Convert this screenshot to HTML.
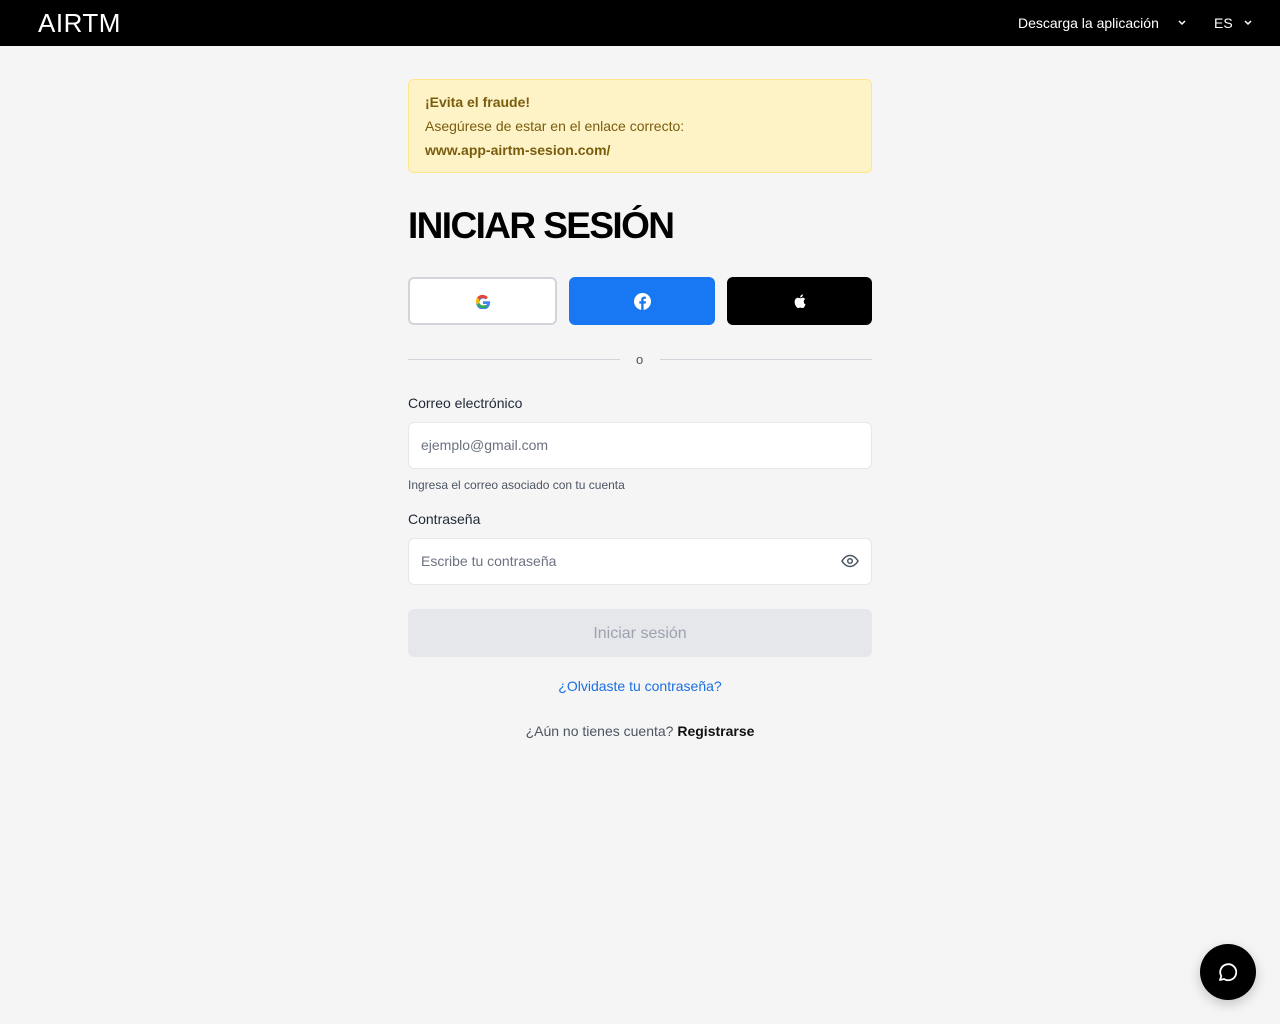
<!DOCTYPE html>
<html><head><meta charset="utf-8"><style>
*{box-sizing:border-box;margin:0;padding:0}
body{width:1280px;height:1024px;background:#f5f5f5;font-family:"Liberation Sans",sans-serif;position:relative;overflow:hidden}
.top{height:46px;background:#000;position:relative;color:#fff}
.logo{position:absolute;left:38px;top:8px;font-size:26px;font-weight:400;letter-spacing:0.5px}
.nav{position:absolute;top:15px;font-size:14px}
.chev{position:absolute;top:19px}
.alert{position:absolute;left:408px;top:79px;width:464px;height:94px;background:#fef3c7;border:1px solid #fde68a;border-radius:6px;color:#7a5c0e;padding:10px 16px;font-size:14px;line-height:24px}
h1{position:absolute;left:408px;top:205px;font-size:37px;font-weight:700;color:#000;letter-spacing:-1.6px}
.btn{position:absolute;top:277px;width:146px;height:48px;border-radius:6px;display:flex;align-items:center;justify-content:center}
.lab{position:absolute;left:408px;font-size:14px;color:#1f2937}
.inp{position:absolute;left:408px;width:464px;height:47px;background:#fff;border:1px solid #e5e7eb;border-radius:6px;padding:0 12px;line-height:45px;font-size:14px;color:#6b7280}
</style></head><body>
<div class="top">
<div class="logo">AIRTM</div>
<div class="nav" style="left:1018px">Descarga la aplicación</div>
<svg class="chev" style="left:1177px" width="10" height="8" viewBox="0 0 10 8"><path d="M2 2l3 3 3-3" fill="none" stroke="#fff" stroke-width="1.5"/></svg>
<div class="nav" style="left:1214px">ES</div>
<svg class="chev" style="left:1243px" width="10" height="8" viewBox="0 0 10 8"><path d="M2 2l3 3 3-3" fill="none" stroke="#fff" stroke-width="1.5"/></svg>
</div>
<div class="alert"><b>¡Evita el fraude!</b><br>Asegúrese de estar en el enlace correcto:<br><b>www.app-airtm-sesion.com/</b></div>
<h1>INICIAR SESIÓN</h1>
<div class="btn" style="left:408px;width:149px;background:#fff;border:2px solid #d1d5db"><svg width="16" height="16" viewBox="0 0 16 16"><path d="M15 8.2H8v2.8h4a4 4 0 1 1-1.2-4.6l2-2A7 7 0 1 0 15 8.2z" fill="#4285f4"/><path d="M2 4.5l2.4 1.8A4 4 0 0 1 10.8 6.4l2-2A7 7 0 0 0 2 4.5z" fill="#ea4335"/><path d="M2 11.5a7 7 0 0 0 10.6 2l-2.2-1.8A4 4 0 0 1 4.3 9.7z" fill="#34a853"/><path d="M2 4.5a7 7 0 0 0 0 7l2.3-1.8a4 4 0 0 1 0-3.4z" fill="#fbbc05"/></svg></div>
<div class="btn" style="left:569px;background:#1877f2"><svg width="17" height="17" viewBox="0 0 16 16"><circle cx="8" cy="8" r="8" fill="#fff"/><path d="M9 16V10h2l.3-2.2H9V6.4c0-.6.2-1 1-1h1.3V3.5A15 15 0 0 0 9.5 3.4C7.9 3.4 6.8 4.4 6.8 6.2v1.6H5V10h1.8v6z" fill="#1877f2"/></svg></div>
<div class="btn" style="left:727px;width:145px;background:#000"><svg width="12" height="14" viewBox="0 0 12 14"><path d="M9.8 7.4c0-1.6 1.3-2.3 1.4-2.4-.8-1.1-2-1.3-2.4-1.3-1-.1-2 .6-2.5.6s-1.3-.6-2.2-.6C2.9 3.7 1.8 4.400 1.2 5.5c-1.2 2.100-.3 5.200.9 6.900.6.800 1.200 1.700 2.100 1.700.8 0 1.200-.5 2.200-.5s1.300.5 2.200.5c.9 0 1.500-.8 2-1.700.6-.9.900-1.800.900-1.900 0 0-1.700-.7-1.700-2.700zM8.200 2.500c.4-.6.800-1.300.700-2.100-.7 0-1.500.5-2 1-.4.500-.800 1.300-.700 2 .800.100 1.500-.300 2-.900z" fill="#fff"/></svg></div>
<div style="position:absolute;left:408px;top:359px;width:212px;border-top:1px solid #d1d5db"></div>
<div style="position:absolute;left:660px;top:359px;width:212px;border-top:1px solid #d1d5db"></div>
<div style="position:absolute;left:636px;top:352px;font-size:13px;color:#4b5563">o</div>
<div class="lab" style="top:395px">Correo electrónico</div>
<div class="inp" style="top:422px">ejemplo@gmail.com</div>
<div style="position:absolute;left:408px;top:478px;font-size:12px;color:#4b5563">Ingresa el correo asociado con tu cuenta</div>
<div class="lab" style="top:511px">Contraseña</div>
<div class="inp" style="top:538px">Escribe tu contraseña
<svg style="position:absolute;right:12px;top:15px" width="18" height="14" viewBox="0 0 18 14"><path d="M1 7s3-5.5 8-5.5S17 7 17 7s-3 5.5-8 5.5S1 7 1 7z" fill="none" stroke="#4b5563" stroke-width="1.5"/><circle cx="9" cy="7" r="2.3" fill="none" stroke="#4b5563" stroke-width="1.5"/></svg></div>
<div style="position:absolute;left:408px;top:609px;width:464px;height:48px;background:#e5e7eb;border-radius:6px;text-align:center;line-height:50px;font-size:16px;color:#9ca3af">Iniciar sesión</div>
<div style="position:absolute;left:0;width:1280px;top:678px;text-align:center;font-size:14px;color:#1d6fe0">¿Olvidaste tu contraseña?</div>
<div style="position:absolute;left:0;width:1280px;top:723px;text-align:center;font-size:14px;color:#4b5563">¿Aún no tienes cuenta? <b style="color:#111">Registrarse</b></div>
<div style="position:absolute;left:1200px;top:944px;width:56px;height:56px;border-radius:50%;background:#000;box-shadow:0 4px 12px rgba(0,0,0,.2)"><svg style="position:absolute;left:16px;top:16px" width="24" height="24" viewBox="0 0 24 24"><path d="M4 20l1.3-3.8A8 8 0 1 1 8 19z" fill="none" stroke="#fff" stroke-width="1.8" stroke-linejoin="round"/></svg></div>
</body></html>
